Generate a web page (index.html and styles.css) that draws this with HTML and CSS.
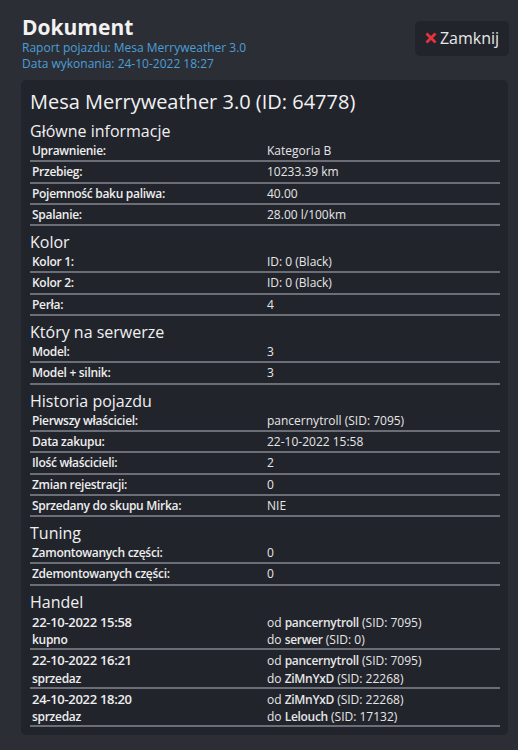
FILE: index.html
```html
<!DOCTYPE html>
<html lang="pl">
<head>
<meta charset="utf-8">
<link rel="stylesheet" href="styles.css">
</head>
<body>
<div class="page">
  <header class="top">
    <div class="top-text">
      <h1 class="doc-title">Dokument</h1>
      <div class="sub">Raport pojazdu: Mesa Merryweather 3.0</div>
      <div class="sub">Data wykonania: 24-10-2022 18:27</div>
    </div>
    <button class="close"><svg class="x-icon" viewBox="0 0 12 12" width="12" height="12"><path d="M1.5 1.5 L10.5 10.5 M10.5 1.5 L1.5 10.5" stroke="#e8323c" stroke-width="2.8" stroke-linecap="butt"/></svg>Zamknij</button>
  </header>
  <main class="card">
    <h2 class="veh-title">Mesa Merryweather 3.0 (ID: 64778)</h2>

    <h3 class="sec">Główne informacje</h3>
    <div class="tbl">
      <div class="row"><div class="k">Uprawnienie:</div><div class="v">Kategoria B</div></div>
      <div class="row"><div class="k">Przebieg:</div><div class="v">10233.39 km</div></div>
      <div class="row"><div class="k">Pojemność baku paliwa:</div><div class="v">40.00</div></div>
      <div class="row"><div class="k">Spalanie:</div><div class="v">28.00 l/100km</div></div>
    </div>

    <h3 class="sec">Kolor</h3>
    <div class="tbl">
      <div class="row"><div class="k">Kolor 1:</div><div class="v">ID: 0 (Black)</div></div>
      <div class="row"><div class="k">Kolor 2:</div><div class="v">ID: 0 (Black)</div></div>
      <div class="row"><div class="k">Perła:</div><div class="v">4</div></div>
    </div>

    <h3 class="sec">Który na serwerze</h3>
    <div class="tbl">
      <div class="row"><div class="k">Model:</div><div class="v">3</div></div>
      <div class="row"><div class="k">Model + silnik:</div><div class="v">3</div></div>
    </div>

    <h3 class="sec">Historia pojazdu</h3>
    <div class="tbl">
      <div class="row"><div class="k">Pierwszy właściciel:</div><div class="v">pancernytroll (SID: 7095)</div></div>
      <div class="row"><div class="k">Data zakupu:</div><div class="v">22-10-2022 15:58</div></div>
      <div class="row"><div class="k">Ilość właścicieli:</div><div class="v">2</div></div>
      <div class="row"><div class="k">Zmian rejestracji:</div><div class="v">0</div></div>
      <div class="row"><div class="k">Sprzedany do skupu Mirka:</div><div class="v">NIE</div></div>
    </div>

    <h3 class="sec">Tuning</h3>
    <div class="tbl">
      <div class="row"><div class="k">Zamontowanych części:</div><div class="v">0</div></div>
      <div class="row"><div class="k">Zdemontowanych części:</div><div class="v">0</div></div>
    </div>

    <h3 class="sec">Handel</h3>
    <div class="tbl">
      <div class="row trade">
        <div class="k"><div class="date">22-10-2022 15:58</div><div>kupno</div></div>
        <div class="v"><div>od <b>pancernytroll</b> (SID: 7095)</div><div>do <b>serwer</b> (SID: 0)</div></div>
      </div>
      <div class="row trade">
        <div class="k"><div class="date">22-10-2022 16:21</div><div>sprzedaz</div></div>
        <div class="v"><div>od <b>pancernytroll</b> (SID: 7095)</div><div>do <b>ZiMnYxD</b> (SID: 22268)</div></div>
      </div>
      <div class="row trade">
        <div class="k"><div class="date">24-10-2022 18:20</div><div>sprzedaz</div></div>
        <div class="v"><div>od <b>ZiMnYxD</b> (SID: 22268)</div><div>do <b>Lelouch</b> (SID: 17132)</div></div>
      </div>
    </div>
  </main>
</div>
</body>
</html>
```
FILE: styles.css
```css
* { box-sizing: border-box; }
html, body {
  margin: 0;
  padding: 0;
  background: #2c2e36;
  color: #ececec;
  font-family: "Open Sans", "Noto Sans", sans-serif;
}
.page {
  padding: 15px 9px 14px 21px;
  min-height: 750px;
}
.top {
  display: flex;
  justify-content: space-between;
  align-items: flex-start;
  padding-left: 1px;
}
.doc-title {
  margin: 0;
  font-size: 21px;
  font-weight: 700;
  line-height: 25px;
  color: #f2f2f2;
}
.sub {
  font-size: 12px;
  line-height: 16px;
  color: #4b9fd6;
}
.close {
  margin-top: 6px;
  width: 94px;
  height: 35px;
  background: #22242c;
  border: none;
  border-radius: 5px;
  color: #e8e8e8;
  font-family: "Open Sans", sans-serif;
  font-size: 16px;
  display: flex;
  align-items: center;
  justify-content: center;
  gap: 3px;
  padding: 0 0 1px 0;
}
.x-icon { display: block; }
.card {
  margin-top: 8px;
  width: 487px;
  background: #22242c;
  border-radius: 5px;
  padding: 9px 8px 8px 9px;
}
.veh-title {
  margin: 0;
  font-size: 20px;
  font-weight: 400;
  line-height: 26px;
  color: #f2f2f2;
}
.sec {
  margin: 6px 0 0 0;
  font-size: 16px;
  font-weight: 400;
  line-height: 20px;
  color: #f0f0f0;
}
.tbl { display: flex; flex-direction: column; }
.row {
  display: grid;
  grid-template-columns: 235px 1fr;
  border-bottom: 2px solid #6b6e76;
  font-size: 12px;
  line-height: 19.3px;
}
.k {
  padding-left: 2px;
  font-weight: 600;
  letter-spacing: -0.3px;
  color: #eeeeee;
}
.v {
  padding-left: 2px;
  color: #e6e6e6;
}
.v b { font-weight: 600; letter-spacing: -0.3px; }
.trade { line-height: 17.25px; padding-top: 2px; }
.trade .date { font-size: 13px; }
```
